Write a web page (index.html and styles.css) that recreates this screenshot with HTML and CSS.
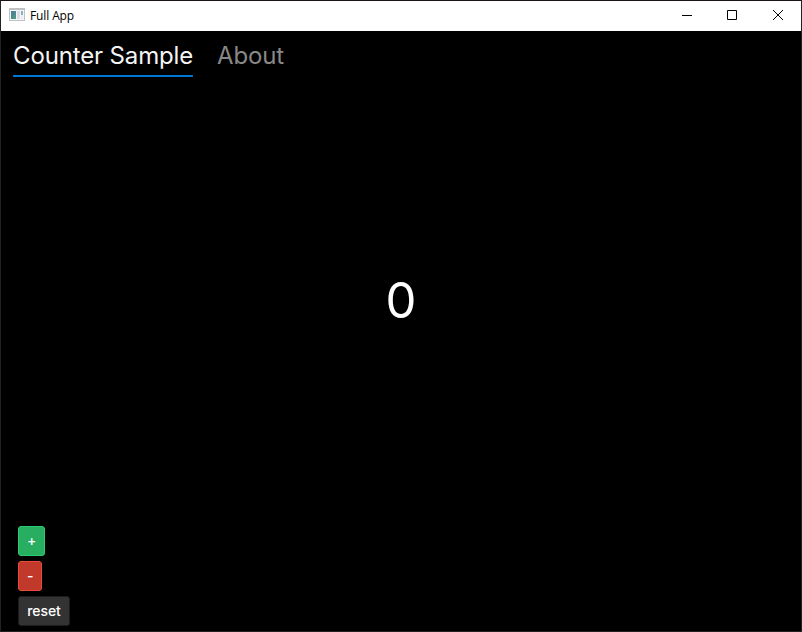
FILE: index.html
```html
<!DOCTYPE html>
<html lang="en">
<head>
<meta charset="utf-8">
<title>Full App</title>
<link rel="stylesheet" href="styles.css">
</head>
<body>
<div class="window">
  <header class="titlebar">
    <svg class="app-icon" width="16" height="14" viewBox="0 0 16 14" shape-rendering="crispEdges">
      <defs>
        <linearGradient id="pane" x1="0" y1="0" x2="1" y2="1">
          <stop offset="0" stop-color="#4c78a4"/>
          <stop offset="1" stop-color="#4ea078"/>
        </linearGradient>
      </defs>
      <rect x="0" y="0" width="16" height="13" fill="#bfc2c4"/>
      <rect x="1" y="2" width="14" height="10" fill="#f6f6f8"/>
      <rect x="2" y="3" width="5" height="8" fill="url(#pane)"/>
      <rect x="8" y="3" width="3" height="8" fill="#dcdde2"/>
      <rect x="12" y="3" width="2" height="4" fill="#8fb0c0"/>
      <rect x="12" y="7" width="2" height="4" fill="#ececf0"/>
    </svg>
    <span class="title">Full App</span>
    <div class="controls">
      <svg width="46" height="30" viewBox="0 0 46 30"><path d="M18 14.5h10"/></svg>
      <svg width="45" height="30" viewBox="0 0 45 30"><path d="M17.5 9.5h9v9h-9z"/></svg>
      <svg width="46" height="30" viewBox="0 0 46 30"><path d="M18 9l10 10M28 9l-10 10"/></svg>
    </div>
  </header>
  <nav class="tabs">
    <div class="tab active">Counter Sample</div>
    <div class="tab">About</div>
  </nav>
  <main class="count">0</main>
  <div class="actions">
    <button class="btn plus">+</button>
    <button class="btn minus">-</button>
    <button class="btn reset">reset</button>
  </div>
</div>
</body>
</html>
```
FILE: styles.css
```css
* { box-sizing: border-box; }
body { margin: 0; background: #000; font-family: Inter, sans-serif; }
.window { width: 802px; height: 632px; border: 1px solid #222; border-top-color: #1a1416; background: #000; color: #fff; display: flex; flex-direction: column; }
.titlebar { height: 30px; flex: none; background: #fff; color: #000; display: flex; align-items: center; padding-left: 8px; }
.app-icon { margin-bottom: 2px; }
.title { margin: -1px 0 0 5px; font: 12px "Open Sans", sans-serif; letter-spacing: -0.12px; flex: 1; }
.controls { display: flex; }
.controls path { fill: none; stroke: #000; stroke-width: 1; }
.tabs { display: flex; gap: 24px; padding-left: 12px; height: 48px; flex: none; }
.tab { height: 46px; font-size: 24px; letter-spacing: -0.14px; line-height: 50px; color: #888; }
.tab.active { width: 180px; white-space: nowrap; color: #f4f4f4; border-bottom: 2px solid #0078d7; border-radius: 1px; }
.count { flex: 1; display: flex; justify-content: center; font-size: 49px; line-height: 58px; padding-top: 193px; }
.actions { display: flex; flex-direction: column; align-items: flex-start; gap: 5px; padding: 0 0 5px 17px; }
.btn { height: 30px; padding: 0 8px 2px; border: 1px solid; border-radius: 3px; color: #fff; font: 500 14px Inter, sans-serif; }
.plus { width: 27px; background: #27ae60; border-color: #2ecc71; }
.minus { width: 24px; background: #c0392b; border-color: #e74c3c; }
.reset { width: 52px; padding: 0 0 2px; letter-spacing: -0.1px; background: #333; border-color: #1c1c1c; }
```
